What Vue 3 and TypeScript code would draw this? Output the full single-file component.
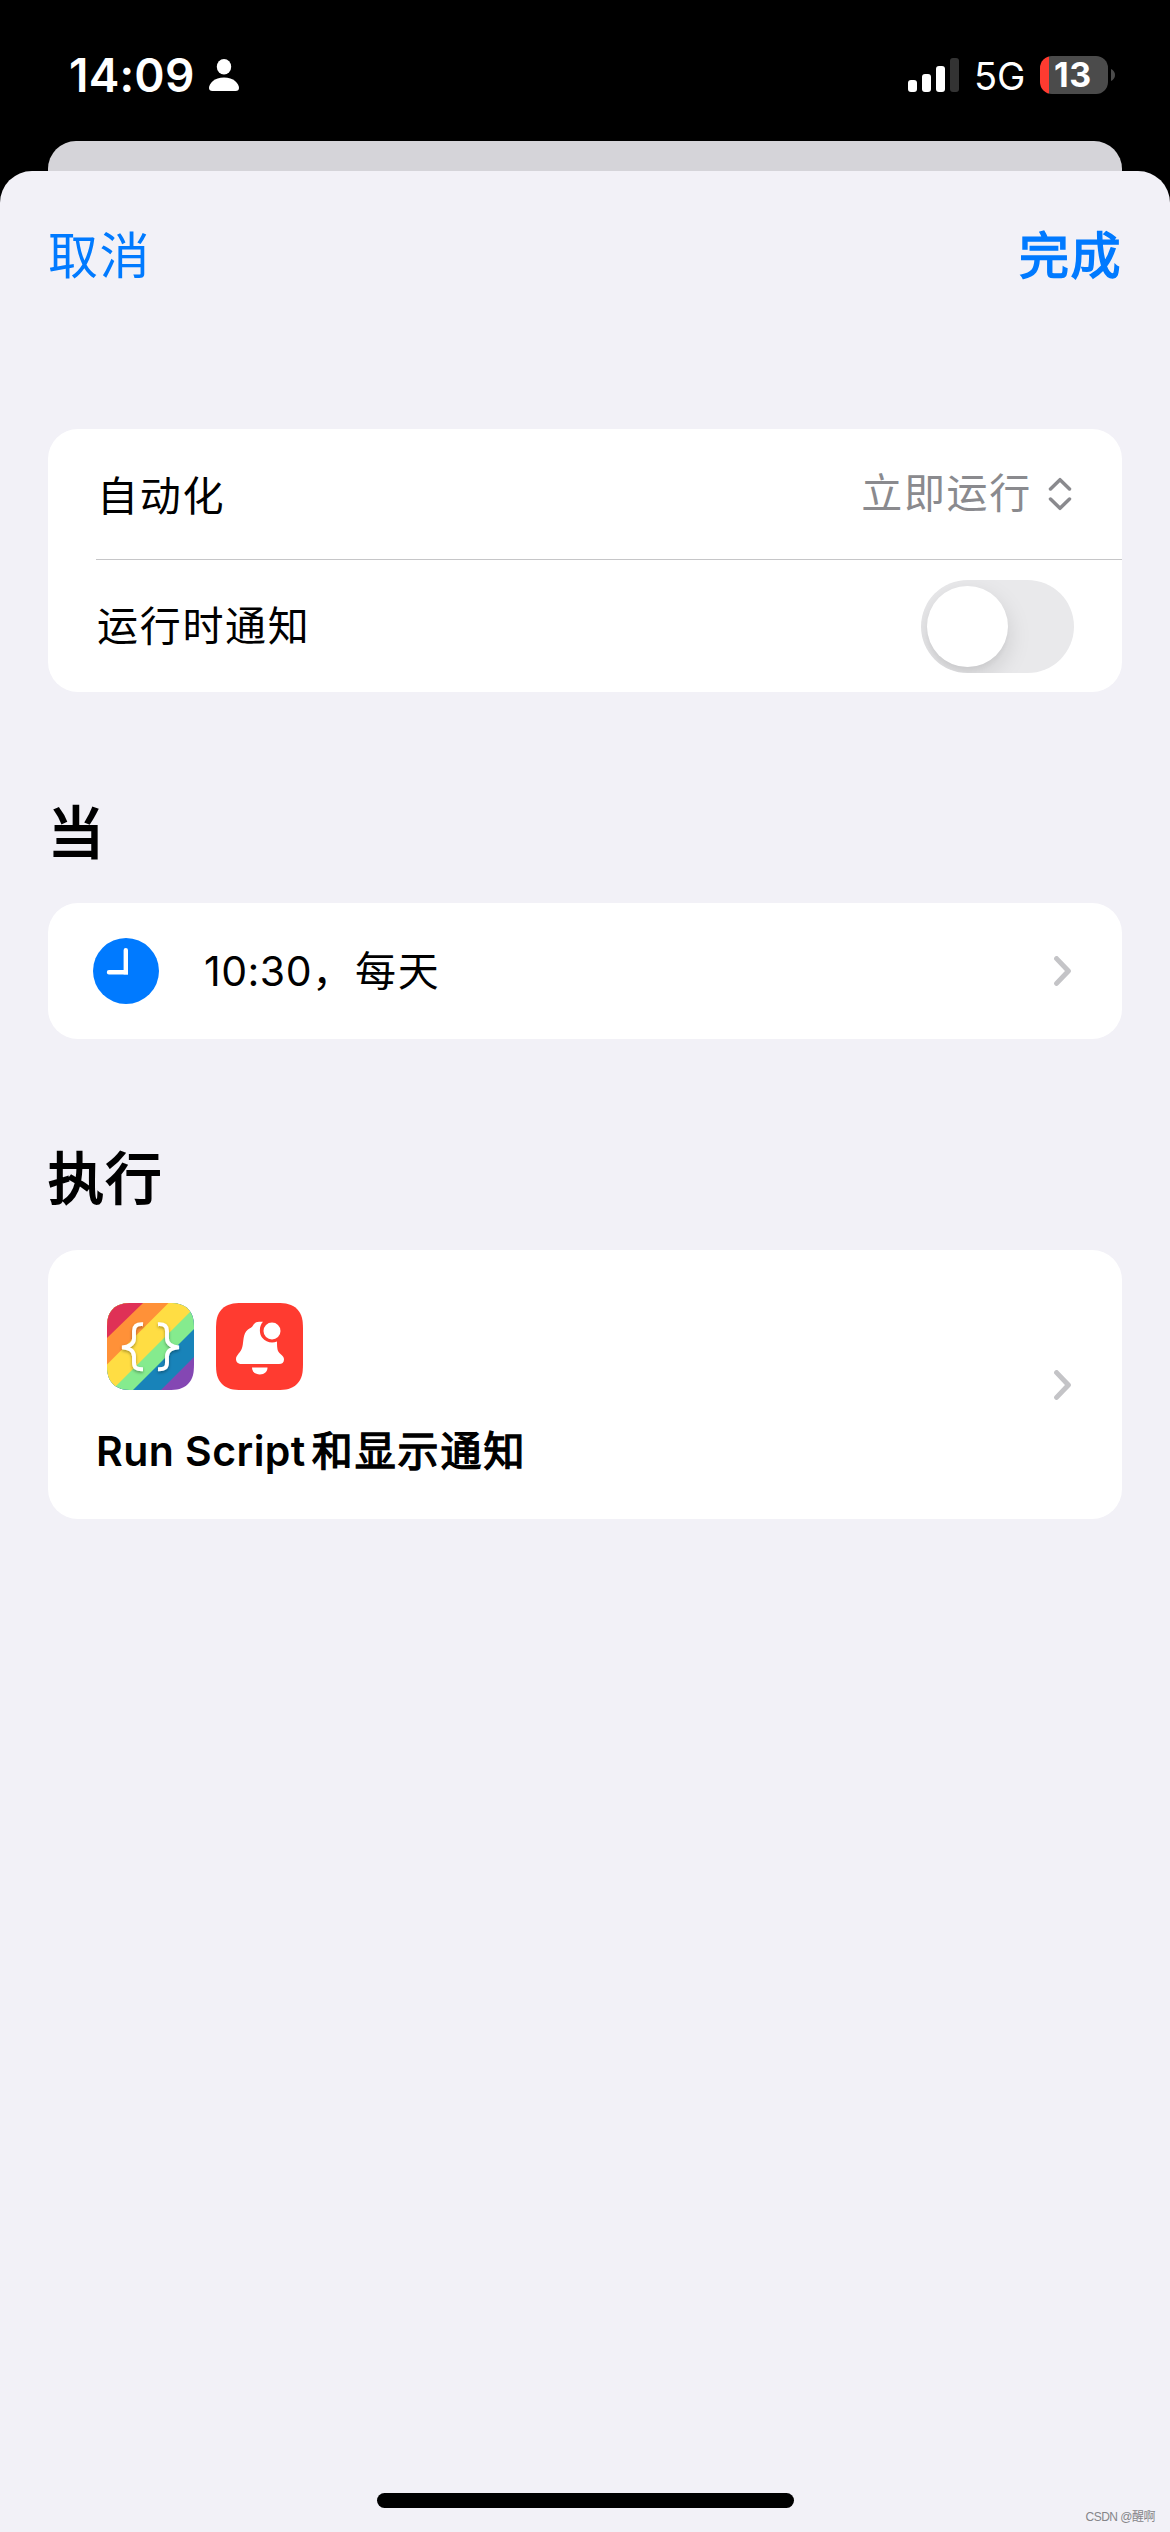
<script setup lang="ts">
interface SignalBar {
  height: number
  active: boolean
}

const signal: SignalBar[] = [
  { height: 12, active: true },
  { height: 18, active: true },
  { height: 26, active: true },
  { height: 34, active: false },
]
</script>

<template>
  <div class="screen">
    <header class="status">
      <div class="status-left">
        <span class="time">14:09</span>
        <svg class="person" width="30" height="32" viewBox="0 0 30 32">
          <ellipse cx="15" cy="7.8" rx="7.2" ry="7.8" fill="#fff" />
          <path d="M3.400 32C1.200 32 0 31 0 29C0 24.500 5.500 18.600 15 18.600S30 24.500 30 29C30 31 28.800 32 26.600 32Z" fill="#fff" />
        </svg>
      </div>
      <div class="status-right">
        <div class="signal">
          <i
            v-for="bar in signal"
            :key="bar.height"
            :class="{ off: !bar.active }"
            :style="{ height: bar.height + 'px' }"
          ></i>
        </div>
        <span class="network">5G</span>
        <div class="battery"><span>13</span></div>
        <svg class="nub" width="4" height="12" viewBox="0 0 4 12">
          <path d="M0 0C2.500 1 4 3.400 4 6S2.500 11 0 12Z" fill="#4b4b4b" />
        </svg>
      </div>
    </header>

    <div class="back-sheet"></div>

    <main class="sheet">
      <nav class="nav">
        <span class="cancel">取消</span>
        <span class="done">完成</span>
      </nav>

      <section class="card options">
        <div class="row first">
          <span class="label">自动化</span>
          <span class="value">立即运行</span>
          <svg class="updown" width="24" height="34" viewBox="0 0 24 34">
            <path d="M2.500 12L12 2.700L21.500 12M2.500 22L12 31.300L21.500 22" fill="none" stroke="#8a8a8e" stroke-width="3.500" stroke-linecap="round" stroke-linejoin="round" />
          </svg>
        </div>
        <div class="row second">
          <span class="label">运行时通知</span>
          <div class="toggle"><div class="thumb"></div></div>
        </div>
      </section>

      <h2 class="when">当</h2>
      <section class="card trigger">
        <svg class="clock" width="66" height="66" viewBox="0 0 66 66">
          <circle cx="33" cy="33" r="33" fill="#007aff" />
          <path d="M32.800 12.300V34.200H16" fill="none" stroke="#fff" stroke-width="4.400" stroke-linecap="round" />
          <rect x="30.600" y="32" width="4.400" height="4.400" fill="#fff" />
        </svg>
        <span class="trigger-text"><span class="hour">10:30</span><span class="rest">，每天</span></span>
        <svg class="chevron" width="17" height="30" viewBox="0 0 17 30">
          <path d="M2.600 2.600L14.400 15L2.600 27.400" fill="none" stroke="#c4c4c7" stroke-width="5" stroke-linecap="round" stroke-linejoin="round" />
        </svg>
      </section>

      <h2 class="do">执行</h2>
      <section class="card action">
        <div class="action-body">
          <div class="apps">
            <svg width="87" height="87" viewBox="0 0 87 87">
              <defs>
                <clipPath id="tile"><path d="M26 0H61C70 0 76 1 81 6S87 17 87 26V61C87 70 86 76 81 81S70 87 61 87H26C17 87 11 86 6 81S0 70 0 61V26C0 17 1 11 6 6S17 0 26 0Z" /></clipPath>
                <filter id="glow" x="-30%" y="-30%" width="160%" height="160%">
                  <feDropShadow dx="0" dy="1.500" stdDeviation="1.500" flood-color="#000" flood-opacity="0.350" />
                </filter>
              </defs>
              <g clip-path="url(#tile)">
                <rect width="87" height="87" fill="#8447b3" />
                <path d="M0 0H87V54L54 87H0Z" fill="#1883b9" />
                <path d="M0 0H87V26L26 87H0Z" fill="#85eb8e" />
                <path d="M0 0H87V5L5 87H0Z" fill="#ffdd43" />
                <path d="M0 0H61.500L0 61.500Z" fill="#ff9138" />
                <path d="M0 0H36L0 35Z" fill="#df3156" />
              </g>
              <path filter="url(#glow)" d="M36 21.200C29 20.700 27 23.500 27 28V35.500C27 41 22 44 15 44.400C22 44.800 27 47.800 27 53.300V59.500C27 64.500 29 66.500 36 66.300M51 21.200C58 20.700 60 23.500 60 28V35.500C60 41 65 44 72 44.400C65 44.800 60 47.800 60 53.300V59.500C60 64.500 58 66.500 51 66.300" fill="none" stroke="#fff" stroke-width="3.900" />
            </svg>
            <svg width="87" height="87" viewBox="0 0 87 87">
              <path d="M26 0H61C70 0 76 1 81 6S87 17 87 26V61C87 70 86 76 81 81S70 87 61 87H26C17 87 11 86 6 81S0 70 0 61V26C0 17 1 11 6 6S17 0 26 0Z" fill="#ff3b30" />
              <path d="M25.500 61C21.500 61 20 58.500 20 56C20 52 25 49.500 26.300 44C28 38 26.500 31 32 26.500C34 25 36 24.500 37 22.500C38.500 19.500 41 18.500 44 18.800H47C43 23 43 30 46 34.500C50 39.500 56 40.500 61 38.500C61 46 61.500 48.500 64.500 51C67 53 68 54.500 68 56.500C68 59.500 66 61 63 61Z" fill="#fff" />
              <circle cx="56" cy="28" r="8.500" fill="#fff" />
              <path d="M36 64.500H51.500C51.500 68.500 48.500 71.500 43.800 71.500S36 68.500 36 64.500Z" fill="#fff" />
            </svg>
          </div>
          <div class="action-title"><span class="latin">Run Script</span><span class="han">和显示通知</span></div>
        </div>
        <svg class="chevron" width="17" height="30" viewBox="0 0 17 30">
          <path d="M2.600 2.600L14.400 15L2.600 27.400" fill="none" stroke="#c4c4c7" stroke-width="5" stroke-linecap="round" stroke-linejoin="round" />
        </svg>
      </section>

      <div class="home"></div>
      <span class="watermark">CSDN @醒啊</span>
    </main>
  </div>
</template>

<style>
body {
  margin: 0;
  background: #000;
}
</style>

<style scoped>
.screen {
  width: 1170px;
  height: 2532px;
  display: flex;
  flex-direction: column;
  overflow: hidden;
  background: #000;
  color: #000;
  font-family: Inter, "Noto Sans CJK SC", sans-serif;
}
.status {
  height: 141px;
  box-sizing: border-box;
  padding: 0 55px 0 69px;
  display: flex;
  justify-content: space-between;
  color: #fff;
}
.status-left,
.status-right {
  height: 150px;
  display: flex;
  align-items: center;
}
.time {
  width: 140px;
  font-size: 46px;
  font-weight: 600;
  line-height: 50px;
  letter-spacing: 0.2px;
}
.signal {
  width: 51px;
  height: 34px;
  margin-top: -1px;
  display: flex;
  align-items: flex-end;
  gap: 5px;
}
.signal i {
  width: 9px;
  border-radius: 3px;
  background: #fff;
}
.signal i.off {
  background: #333;
}
.network {
  width: 50px;
  margin: 2px 16px 0 15px;
  font-size: 38px;
  line-height: 40px;
  white-space: nowrap;
}
.battery {
  width: 68px;
  height: 38px;
  margin-top: -1px;
  box-sizing: border-box;
  padding-left: 14px;
  border-radius: 12px;
  background: linear-gradient(to right, #ff3b30 9px, #4b4b4b 9px);
  font-size: 34px;
  font-weight: 700;
  line-height: 37px;
  letter-spacing: 0.5px;
}
.nub {
  margin-left: 3px;
}
.back-sheet {
  flex: none;
  height: 30px;
  margin: 0 48px;
  border-radius: 28px 28px 0 0;
  background: #d5d4d9;
}
.sheet {
  position: relative;
  flex: 1;
  display: flex;
  flex-direction: column;
  padding: 0 48px;
  border-radius: 32px 32px 0 0;
  background: #f2f1f7;
}
.nav {
  height: 258px;
  display: flex;
  justify-content: space-between;
  color: #007aff;
  font-size: 50px;
  line-height: 60px;
  letter-spacing: 1.5px;
}
.nav span {
  margin-top: 55px;
}
.done {
  -webkit-text-stroke: 1.6px #007aff;
}
.card {
  display: flex;
  border-radius: 30px;
  background: #fff;
}
.options {
  height: 263px;
  flex-direction: column;
}
.row {
  display: flex;
  align-items: center;
  margin-left: 48px;
  padding-right: 48px;
  font-size: 41px;
  line-height: 50px;
  letter-spacing: 1.7px;
}
.first {
  height: 130px;
  padding-right: 50px;
  border-bottom: 1px solid #c6c6c8;
}
.first .label {
  margin-top: 3px;
}
.second {
  height: 132px;
}
.label {
  flex: 1;
  padding-left: 1px;
}
.value {
  margin: -2px 16px 0 0;
  color: #8a8a8e;
}
.toggle {
  width: 153px;
  height: 93px;
  box-sizing: border-box;
  padding: 6px;
  border-radius: 47px;
  background: #e9e9eb;
  overflow: hidden;
}
.thumb {
  width: 81px;
  height: 81px;
  border-radius: 50%;
  background: #fff;
  box-shadow: 0 9px 24px rgba(0, 0, 0, 0.13), 0 4px 4px rgba(0, 0, 0, 0.03);
}
h2 {
  margin: 0;
  font-size: 56px;
  font-weight: 400;
  line-height: 70px;
  letter-spacing: 1.5px;
  -webkit-text-stroke: 2px #000;
}
.when {
  height: 105px;
  padding: 106px 0 0 0;
}
.do {
  height: 106px;
  padding: 105px 0 0 0;
}
.trigger {
  height: 136px;
  align-items: center;
  padding: 0 51px 0 45px;
}
.trigger-text {
  flex: 1;
  margin-left: 45px;
  font-size: 41px;
  line-height: 50px;
}
.hour {
  letter-spacing: 0.5px;
}
.rest {
  letter-spacing: 1.9px;
}
.action {
  height: 269px;
  align-items: center;
  padding: 0 51px 0 48px;
}
.action-body {
  flex: 1;
  height: 269px;
}
.apps {
  height: 87px;
  padding: 53px 0 0 11px;
  display: flex;
  gap: 22px;
}
.action-title {
  margin-top: 36px;
  font-size: 41px;
  line-height: 50px;
}
.latin {
  font-weight: 600;
  letter-spacing: 0.45px;
}
.han {
  margin-left: 6px;
  letter-spacing: 1.9px;
  -webkit-text-stroke: 1.4px #000;
}
.home {
  width: 417px;
  height: 15px;
  margin: auto auto 24px;
  border-radius: 8px;
  background: #000;
}
.watermark {
  position: absolute;
  right: 15px;
  bottom: 6px;
  color: #858589;
  font-family: "Liberation Sans", "Noto Sans CJK SC", sans-serif;
  font-size: 12px;
  line-height: 18px;
  letter-spacing: -0.5px;
}
</style>
